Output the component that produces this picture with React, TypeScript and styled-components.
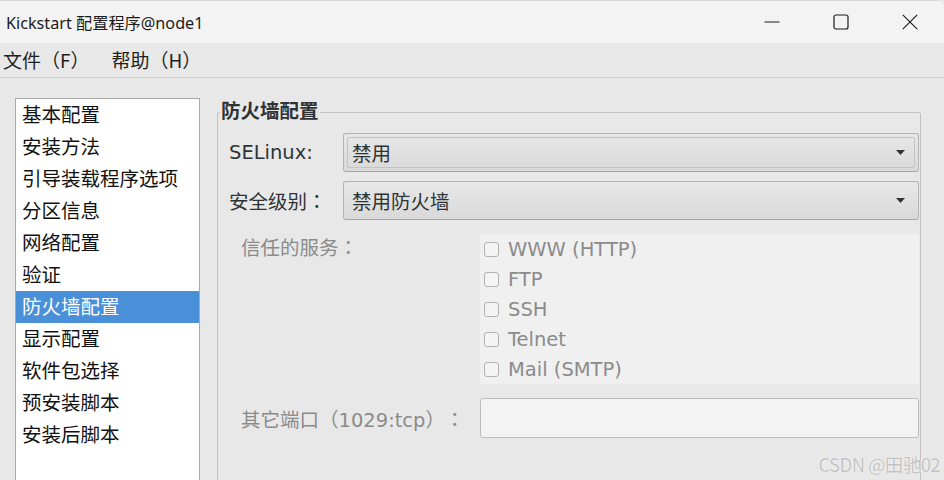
import styled, { createGlobalStyle } from 'styled-components';

const GlobalStyle = createGlobalStyle`
  html, body {
    margin: 0;
    padding: 0;
    background: #e8e8e8;
  }
  body {
    font-family: "DejaVu Sans", "Noto Sans CJK SC", sans-serif;
    text-spacing-trim: space-all;
  }
`;

const Window = styled.div`
  position: relative;
  width: 944px;
  height: 480px;
  overflow: hidden;
  display: flex;
  flex-direction: column;
  background: #e8e8e8;
  border-top-right-radius: 8px;
`;

const TitleBar = styled.div`
  height: 43px;
  flex-shrink: 0;
  display: flex;
  align-items: center;
  padding-left: 6px;
  background: #f3f3f3;
  border-top: 1px solid #d6d6d6;
  box-sizing: border-box;
`;

const Title = styled.div`
  font-family: "Noto Sans", "Noto Sans CJK SC", sans-serif;
  font-size: 16.2px;
  color: #1b1b1b;
`;

const Controls = styled.div`
  margin-left: auto;
  display: flex;
  height: 100%;
`;

const ControlButton = styled.div`
  width: 69px;
  height: 100%;
  display: flex;
  align-items: center;
  justify-content: center;
`;

const MenuBar = styled.div`
  height: 34px;
  flex-shrink: 0;
  display: flex;
  align-items: center;
  gap: 22px;
  padding-left: 3px;
  border-bottom: 1px solid #d2d2d2;
  font-family: "Noto Sans CJK SC", sans-serif;
  font-size: 19px;
  color: #1f1f1f;
`;

const MenuItem = styled.span`
  line-height: 34px;
`;

const Body = styled.div`
  flex: 1;
  min-height: 0;
  display: flex;
  align-items: flex-start;
  gap: 17px;
  padding: 20px 23px 0 15px;
`;

const NavList = styled.div`
  width: 185px;
  height: 400px;
  flex-shrink: 0;
  box-sizing: border-box;
  background: #ffffff;
  border: 1px solid #a9a9a9;
`;

const NavItem = styled.div<{ $selected?: boolean }>`
  height: 32px;
  line-height: 33px;
  padding-left: 6px;
  font-size: 19.5px;
  color: ${(p) => (p.$selected ? '#ffffff' : '#111111')};
  background: ${(p) => (p.$selected ? '#4a90d9' : 'transparent')};
  white-space: nowrap;
`;

const Frame = styled.fieldset`
  flex: 1;
  min-width: 0;
  height: 400px;
  margin: 0;
  padding: 7px 1px 0 11px;
  border: 1px solid #c2c2c2;
  border-radius: 2px;
  box-sizing: border-box;
`;

const FrameTitle = styled.legend`
  margin-left: -9px;
  padding: 0 1px;
  line-height: 28px;
  font-size: 19.5px;
  font-weight: bold;
  color: #2e3436;
`;

const FormGrid = styled.div`
  display: grid;
  grid-template-columns: 114px 1fr;
  row-gap: 9px;
  align-items: center;
`;

const Label = styled.div<{ $disabled?: boolean }>`
  font-size: 19.5px;
  color: ${(p) => (p.$disabled ? '#8b8b8b' : '#2e3436')};
  white-space: nowrap;
`;

const FullColon = styled.span`
  font-family: "Noto Sans CJK TC", sans-serif;
`;

const Combo = styled.div`
  height: 39px;
  box-sizing: border-box;
  display: flex;
  border: 1px solid #b4b4b4;
  border-bottom-color: #a4a4a4;
  border-radius: 3px;
  background: linear-gradient(to bottom, #e8e8e8, #d9d9d9);
`;

const ComboInner = styled.div<{ $focused?: boolean }>`
  flex: 1;
  margin: 3px;
  display: flex;
  align-items: center;
  padding: 0 9px 0 4px;
  border: 1px solid ${(p) => (p.$focused ? '#c3c3c3' : 'transparent')};
  border-radius: 2px;
  font-size: 19.5px;
  color: #2e3436;
`;

const ComboText = styled.span`
  flex: 1;
`;

const Section = styled.div`
  display: grid;
  grid-template-columns: 239px 1fr;
  margin-top: 14px;
  padding-left: 12px;
  align-items: start;
`;

const ServicesLabel = styled(Label)`
  line-height: 26px;
`;

const ServicePanel = styled.div`
  background: #f0f0f0;
`;

const ServiceRow = styled.div`
  height: 30px;
  display: flex;
  align-items: center;
  gap: 9px;
  padding-left: 4px;
  font-size: 19.5px;
  color: #8b8b8b;
`;

const CheckBox = styled.span`
  width: 15px;
  height: 15px;
  box-sizing: border-box;
  border: 1px solid #b2b2b2;
  border-radius: 3px;
  background: #f4f4f4;
`;

const PortSection = styled(Section)`
  align-items: center;
`;

const PortInput = styled.div`
  height: 40px;
  box-sizing: border-box;
  border: 1px solid #bdbdbd;
  border-radius: 3px;
  background: #f3f3f3;
`;

const Watermark = styled.div`
  position: absolute;
  right: 4px;
  bottom: 3px;
  font-family: "Noto Sans CJK SC", sans-serif;
  font-size: 18.5px;
  letter-spacing: -0.6px;
  color: #c2c2c2;
  text-shadow: 0 0 1px #ffffff, 0 0 1px #ffffff;
`;

const navItems = [
  '基本配置',
  '安装方法',
  '引导装载程序选项',
  '分区信息',
  '网络配置',
  '验证',
  '防火墙配置',
  '显示配置',
  '软件包选择',
  '预安装脚本',
  '安装后脚本',
];

const services = ['WWW (HTTP)', 'FTP', 'SSH', 'Telnet', 'Mail (SMTP)'];

const Arrow = () => (
  <svg width="9" height="5" viewBox="0 0 9 5">
    <path d="M0 0 H9 L4.5 5 Z" fill="#2e3436" />
  </svg>
);

export default function App() {
  return (
    <>
      <GlobalStyle />
      <Window>
        <TitleBar>
          <Title>Kickstart 配置程序@node1</Title>
          <Controls>
            <ControlButton>
              <svg width="16" height="16" viewBox="0 0 16 16">
                <path d="M0.5 8 H15.5" stroke="#1a1a1a" strokeWidth="1" />
              </svg>
            </ControlButton>
            <ControlButton>
              <svg width="16" height="16" viewBox="0 0 16 16">
                <rect x="1" y="1" width="14" height="14" rx="2" fill="none" stroke="#1a1a1a" strokeWidth="1.2" />
              </svg>
            </ControlButton>
            <ControlButton>
              <svg width="16" height="16" viewBox="0 0 16 16">
                <path d="M0.8 0.8 L15.2 15.2 M15.2 0.8 L0.8 15.2" stroke="#1a1a1a" strokeWidth="1.1" />
              </svg>
            </ControlButton>
          </Controls>
        </TitleBar>
        <MenuBar>
          <MenuItem>文件（F）</MenuItem>
          <MenuItem>帮助（H）</MenuItem>
        </MenuBar>
        <Body>
          <NavList>
            {navItems.map((item) => (
              <NavItem key={item} $selected={item === '防火墙配置'}>
                {item}
              </NavItem>
            ))}
          </NavList>
          <Frame>
            <FrameTitle>防火墙配置</FrameTitle>
            <FormGrid>
              <Label>SELinux:</Label>
              <Combo>
                <ComboInner $focused>
                  <ComboText>禁用</ComboText>
                  <Arrow />
                </ComboInner>
              </Combo>
              <Label>
                安全级别<FullColon>：</FullColon>
              </Label>
              <Combo>
                <ComboInner>
                  <ComboText>禁用防火墙</ComboText>
                  <Arrow />
                </ComboInner>
              </Combo>
            </FormGrid>
            <Section>
              <ServicesLabel $disabled>
                信任的服务<FullColon>：</FullColon>
              </ServicesLabel>
              <ServicePanel>
                {services.map((s) => (
                  <ServiceRow key={s}>
                    <CheckBox />
                    {s}
                  </ServiceRow>
                ))}
              </ServicePanel>
            </Section>
            <PortSection>
              <Label $disabled>
                其它端口（1029:tcp）<FullColon>：</FullColon>
              </Label>
              <PortInput />
            </PortSection>
          </Frame>
        </Body>
        <Watermark>CSDN @田驰02</Watermark>
      </Window>
    </>
  );
}
